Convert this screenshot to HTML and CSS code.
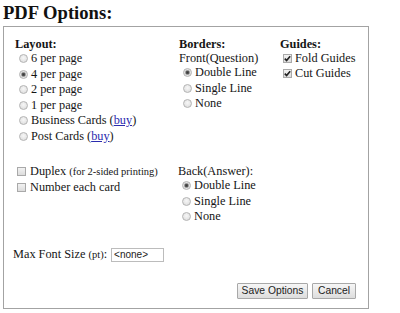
FILE: index.html
```html
<!DOCTYPE html>
<html>
<head>
<meta charset="utf-8">
<link rel="stylesheet" href="styles.css">
</head>
<body>
<h1 class="title">PDF Options:</h1>
<div class="box">
  <div class="sec sec1">
    <div class="col c1">
      <div class="hd">Layout:</div>
      <div class="opt"><span class="rd"></span>6 per page</div>
      <div class="opt"><span class="rd on"></span>4 per page</div>
      <div class="opt"><span class="rd"></span>2 per page</div>
      <div class="opt"><span class="rd"></span>1 per page</div>
      <div class="opt"><span class="rd"></span>Business Cards (<a href="#" class="lk">buy</a>)</div>
      <div class="opt"><span class="rd"></span>Post Cards (<a href="#" class="lk">buy</a>)</div>
    </div>
    <div class="col c2">
      <div class="hd">Borders:</div>
      <div class="tx">Front(Question)</div>
      <div class="opt"><span class="rd on"></span>Double Line</div>
      <div class="opt"><span class="rd"></span>Single Line</div>
      <div class="opt"><span class="rd"></span>None</div>
    </div>
    <div class="col c3">
      <div class="hd">Guides:</div>
      <div class="chk"><span class="cb"><svg width="9" height="9" viewBox="0 0 9 9"><path d="M1.8 4.6 L3.6 6.6 L7.2 2.2" fill="none" stroke="#222" stroke-width="1.6"/></svg></span>Fold Guides</div>
      <div class="chk"><span class="cb"><svg width="9" height="9" viewBox="0 0 9 9"><path d="M1.8 4.6 L3.6 6.6 L7.2 2.2" fill="none" stroke="#222" stroke-width="1.6"/></svg></span>Cut Guides</div>
    </div>
  </div>
  <div class="sec sec2">
    <div class="col d1">
      <div class="chk2"><span class="cb"></span>Duplex <small class="sm">(for 2-sided printing)</small></div>
      <div class="chk2"><span class="cb"></span>Number each card</div>
    </div>
    <div class="col d2">
      <div class="tx">Back(Answer):</div>
      <div class="opt"><span class="rd on"></span>Double Line</div>
      <div class="opt"><span class="rd"></span>Single Line</div>
      <div class="opt"><span class="rd"></span>None</div>
    </div>
  </div>
  <div class="fontrow">
    <span>Max Font Size <small class="sm">(pt)</small>:</span>
    <input class="inp" type="text" value="&lt;none&gt;">
  </div>
  <div class="btns">
    <button class="btn save">Save Options</button>
    <button class="btn cancel">Cancel</button>
  </div>
</div>
</body>
</html>
```

FILE: styles.css
```css
html, body {
  margin: 0;
  padding: 0;
  background: #ffffff;
}
body {
  font-family: "Liberation Serif", "Times New Roman", serif;
  font-size: 12.3px;
  color: #151515;
  width: 400px;
  height: 313px;
  overflow: hidden;
}
.title {
  font-size: 18.6px;
  font-weight: bold;
  line-height: 22px;
  margin: 2px 0 2px 3px;
  color: #111;
}
.box {
  box-sizing: border-box;
  margin-left: 3px;
  width: 366px;
  height: 283px;
  border: 1px solid #a3a3a3;
  padding: 10px 12px 0 11px;
}
.sec {
  display: flex;
}
.c1 { width: 164px; }
.c2 { width: 101px; }
.d1 { width: 163px; }
.sec2 { margin-top: 19px; }
.hd {
  font-weight: bold;
  line-height: 14px;
}
.tx {
  line-height: 14px;
}
.d2 .tx { margin-top: 1px; }
.opt {
  display: flex;
  align-items: center;
  height: 15.5px;
  white-space: nowrap;
}
.rd {
  box-sizing: border-box;
  width: 9px;
  height: 9px;
  border-radius: 50%;
  border: 1px solid #b4b4b4;
  background: radial-gradient(circle at 50% 40%, #f7f7f7 0%, #e2e2e2 70%, #d4d4d4 100%);
  margin: 0 3px 0 4px;
  flex: none;
}
.rd.on {
  background: radial-gradient(circle, #3a3a3a 0%, #555 28%, #9a9a9a 40%, #e4e4e4 60%, #d8d8d8 100%);
}
.lk {
  color: #2b2bae;
  text-decoration: underline;
}
.chk, .chk2 {
  display: flex;
  align-items: center;
  white-space: nowrap;
}
.chk { height: 15px; }
.chk2 { height: 16px; }
.cb {
  box-sizing: border-box;
  width: 9px;
  height: 9px;
  border: 1px solid #a9a9a9;
  background: linear-gradient(#f2f2f2, #dcdcdc);
  flex: none;
  display: flex;
  align-items: center;
  justify-content: center;
}
.cb svg { display: block; margin: -1px; }
.chk .cb { margin: 0 3px 0 3px; }
.chk2 .cb { margin: 0 4px 0 2px; }
.sm {
  font-size: 10.5px;
  margin-left: 3px;
}
.fontrow .sm { margin-left: 0; }
.fontrow {
  display: flex;
  align-items: center;
  height: 16px;
  margin: 22px 0 0 -2px;
  white-space: nowrap;
}
.inp {
  box-sizing: border-box;
  width: 53px;
  height: 14px;
  margin: 0 0 0 4px;
  padding: 0 2px;
  border: 1px solid #bcbcbc;
  font-family: "Liberation Sans", Arial, sans-serif;
  font-size: 10px;
  color: #222;
  background: #fff;
  outline: none;
}
.btns {
  display: flex;
  justify-content: flex-end;
  gap: 4px;
  margin-top: 20px;
}
.btn {
  box-sizing: border-box;
  height: 16px;
  padding: 0;
  border: 1px solid #a8a8a8;
  border-radius: 1px;
  background: linear-gradient(#f6f6f6, #dddddd);
  font-family: "Liberation Sans", Arial, sans-serif;
  font-size: 10.3px;
  color: #222;
  line-height: 14px;
}
.save { width: 71px; }
.cancel { width: 44px; }
```
